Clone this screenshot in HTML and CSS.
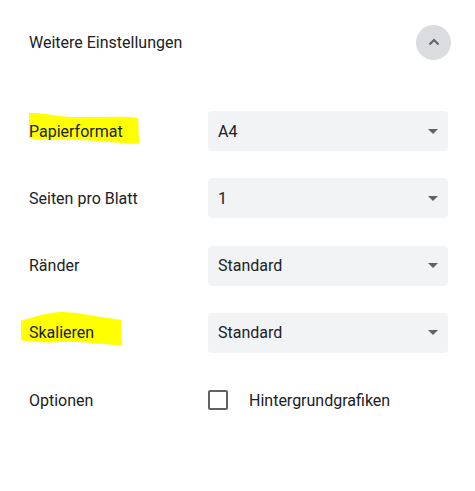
FILE: index.html
```html
<!DOCTYPE html>
<html lang="de">
<head>
<meta charset="utf-8">
<link rel="stylesheet" href="styles.css">
</head>
<body>
<div class="panel">
  <div class="header">
    <span class="title">Weitere Einstellungen</span>
    <button class="toggle" aria-label="Einklappen">
      <svg width="12" height="8" viewBox="0 0 12 8"><path d="M1.5 6.5 L6 2 L10.5 6.5" fill="none" stroke="#5f6368" stroke-width="2"/></svg>
    </button>
  </div>
  <div class="settings">
    <div class="row">
      <span class="label hl">
        <svg class="mark" viewBox="0 0 115 32" preserveAspectRatio="none"><path d="M2 1 C20 0 30 6 60 5 C90 5 105 4 113 6 L114 31 C95 32 70 28 50 28 C30 27 15 29 2 26 Z" fill="#ffff00"/></svg>
        <span class="text">Papierformat</span>
      </span>
      <div class="select"><span>A4</span><i class="caret"></i></div>
    </div>
    <div class="row">
      <span class="label">Seiten pro Blatt</span>
      <div class="select"><span>1</span><i class="caret"></i></div>
    </div>
    <div class="row">
      <span class="label">Ränder</span>
      <div class="select"><span>Standard</span><i class="caret"></i></div>
    </div>
    <div class="row">
      <span class="label hl">
        <svg class="mark mark2" viewBox="0 0 103 36" preserveAspectRatio="none"><path d="M1 10 C15 6 25 2 40 1 C60 1 75 6 102 9 L103 35 C85 35 60 30 40 32 C25 33 10 31 1 30 Z" fill="#ffff00"/></svg>
        <span class="text">Skalieren</span>
      </span>
      <div class="select"><span>Standard</span><i class="caret"></i></div>
    </div>
    <div class="row">
      <span class="label">Optionen</span>
      <label class="check"><span class="box"></span><span>Hintergrundgrafiken</span></label>
    </div>
  </div>
</div>
</body>
</html>
```
FILE: styles.css
```css
html, body {
  margin: 0;
  padding: 0;
  background: #ffffff;
}
body {
  font-family: Roboto, "Liberation Sans", sans-serif;
  font-size: 16px;
  color: #202124;
}
.panel {
  padding: 24px 27px 0 29px;
}
.header {
  display: flex;
  align-items: center;
  justify-content: space-between;
  height: 36px;
}
.toggle {
  width: 35px;
  height: 35px;
  margin-right: -3px;
  border: none;
  border-radius: 50%;
  background: #dadce0;
  display: flex;
  align-items: center;
  justify-content: center;
  padding: 0;
}
.settings {
  margin-top: 51px;
  display: flex;
  flex-direction: column;
  gap: 27.33px;
}
.row {
  display: grid;
  grid-template-columns: 179px 240px;
  align-items: center;
  height: 40px;
}
.label {
  position: relative;
}
.hl .text {
  position: relative;
}
.mark {
  position: absolute;
  left: -2px;
  top: -10px;
  width: 113px;
  height: 32px;
}
.mark2 {
  left: -9px;
  top: -12px;
  width: 102px;
  height: 35px;
}
.select {
  height: 40px;
  background: #f1f3f4;
  border-radius: 4px;
  display: flex;
  align-items: center;
  justify-content: space-between;
  padding: 0 10px 0 10px;
  box-sizing: border-box;
}
.caret {
  width: 0;
  height: 0;
  border-left: 5.5px solid transparent;
  border-right: 5.5px solid transparent;
  border-top: 5.5px solid #5f6368;
}
.check {
  display: flex;
  align-items: center;
  gap: 21px;
}
.box {
  width: 20px;
  height: 20px;
  box-sizing: border-box;
  border: 2px solid #5f6368;
  border-radius: 2px;
}
```
